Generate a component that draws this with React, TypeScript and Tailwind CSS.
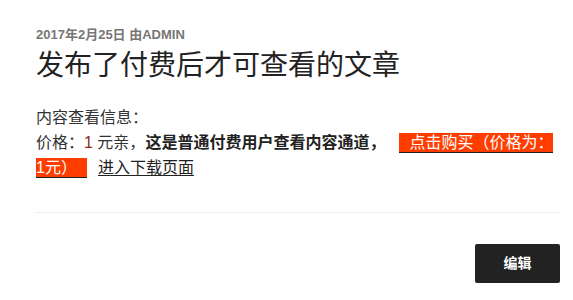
export default function App() {
  return (
    <div className="min-h-[300px] bg-white pl-[36px] pr-[13px] pt-[25px] font-['Liberation_Sans','Noto_Sans_CJK_SC',sans-serif] text-[#333]">
      {/* Post meta */}
      <div className="text-[13px] font-bold leading-[20px] text-[#767676]">
        2017年2月25日 由ADMIN
      </div>
      <h1 className="mt-[3px] text-[28px] font-normal leading-[36px] text-[#222]">
        发布了付费后才可查看的文章
      </h1>

      {/* Content */}
      <div className="mt-[21px] text-[16px] leading-[25px] text-[#333]">
        <p>内容查看信息：</p>
        <p>
          价格：<span className="text-[#8a2a1a]">1</span> 元亲，
          <strong className="font-bold text-[#222]">这是普通付费用户查看内容通道，</strong>
          <span className="ml-[14px] border-b border-[#222] bg-[#ff3d00] px-[10px] py-[1px] text-white">
            点击购买（价格为：<br />1元）
          </span>
          <a href="#" className="ml-[11px] text-[#222] underline underline-offset-2">
            进入下载页面
          </a>
        </p>
      </div>

      <div className="mt-[32px] h-px bg-[#eeeeee]" />

      {/* Footer */}
      <div className="mt-[31px] flex justify-end">
        <button className="flex h-[39px] w-[85px] items-center justify-center rounded-[2px] bg-[#222] text-[14px] font-bold text-white">
          编辑
        </button>
      </div>
    </div>
  );
}
